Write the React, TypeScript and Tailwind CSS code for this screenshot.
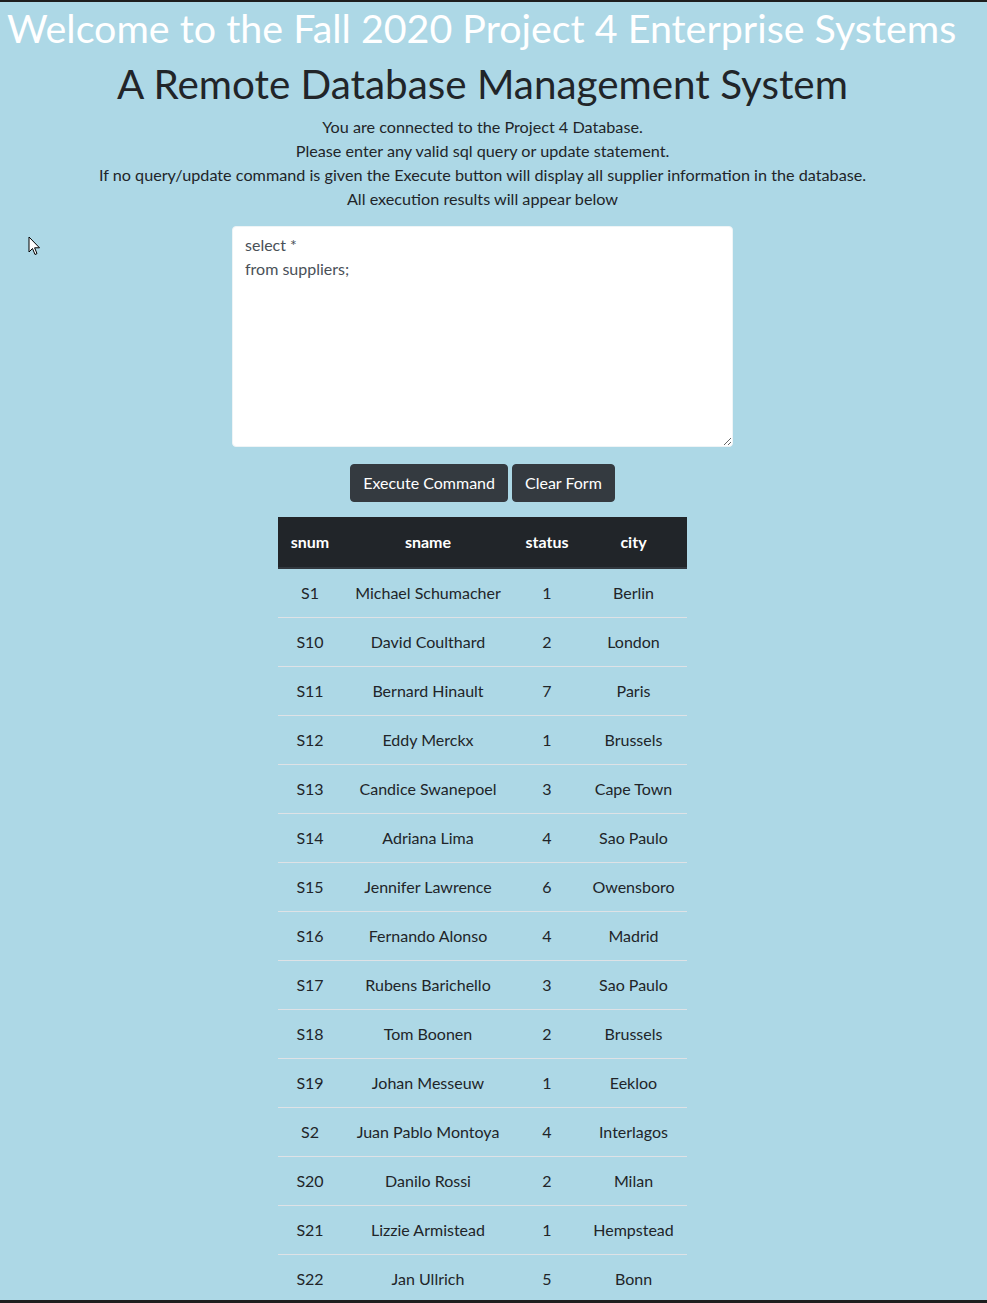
import React from "react";

const rows = [
  ["S1", "Michael Schumacher", "1", "Berlin"],
  ["S10", "David Coulthard", "2", "London"],
  ["S11", "Bernard Hinault", "7", "Paris"],
  ["S12", "Eddy Merckx", "1", "Brussels"],
  ["S13", "Candice Swanepoel", "3", "Cape Town"],
  ["S14", "Adriana Lima", "4", "Sao Paulo"],
  ["S15", "Jennifer Lawrence", "6", "Owensboro"],
  ["S16", "Fernando Alonso", "4", "Madrid"],
  ["S17", "Rubens Barichello", "3", "Sao Paulo"],
  ["S18", "Tom Boonen", "2", "Brussels"],
  ["S19", "Johan Messeuw", "1", "Eekloo"],
  ["S2", "Juan Pablo Montoya", "4", "Interlagos"],
  ["S20", "Danilo Rossi", "2", "Milan"],
  ["S21", "Lizzie Armistead", "1", "Hempstead"],
  ["S22", "Jan Ullrich", "5", "Bonn"],
];

export default function App() {
  return (
    <div
      className="relative w-[987px] h-[1303px] overflow-hidden bg-[#add8e6] border-t-2 border-b-[3px] border-[#1e1e1e] text-[#212529]"
      style={{ fontFamily: '"Segoe UI", Lato, "Open Sans", sans-serif' }}
    >
      {/* mouse pointer */}
      <svg className="absolute left-[28px] top-[234px]" width="14" height="20" viewBox="0 0 14 20">
        <path d="M1 1 L1 16 L4.5 12.5 L7 18.5 L9 17.6 L6.6 11.8 L11.5 11.8 Z" fill="#fff" stroke="#000" strokeWidth="1" strokeLinejoin="round" />
      </svg>

      <div className="w-[965px]">
        <h1 className="pl-[7px] pt-[2px] whitespace-nowrap text-[39.4px] leading-[48px] text-white mb-2">
          Welcome to the Fall 2020 Project 4 Enterprise Systems
        </h1>
        <h2 className="text-center whitespace-nowrap text-[40.4px] leading-[48px] mb-[7px]">
          A Remote Database Management System
        </h2>
        <div className="text-center text-[16.2px] leading-6">
          <p>You are connected to the Project 4 Database.</p>
          <p>Please enter any valid sql query or update statement.</p>
          <p>If no query/update command is given the Execute button will display all supplier information in the database.</p>
          <p>All execution results will appear below</p>
        </div>

        <div className="flex justify-center mt-[15px]">
          <textarea
            className="w-[501px] h-[221px] bg-white rounded border border-[#eef4f6] px-3 py-[6px] text-base leading-6 text-[#495057] outline-none"
            defaultValue={"select *\nfrom suppliers;"}
          />
        </div>

        <div className="flex justify-center gap-1 mt-[17px]">
          <button className="h-[38px] px-3 rounded bg-[#343a40] border border-[#343a40] text-white text-base">
            Execute Command
          </button>
          <button className="h-[38px] px-3 rounded bg-[#343a40] border border-[#343a40] text-white text-base">
            Clear Form
          </button>
        </div>

        <div className="flex justify-center mt-[15px]">
          <table className="w-[409px] border-collapse text-base leading-6">
            <thead>
              <tr className="bg-[#212529] text-white">
                <th className="w-[64px] h-[51px] p-0 font-bold border-b-2 border-[#32383e]">snum</th>
                <th className="w-[172px] h-[51px] p-0 font-bold border-b-2 border-[#32383e]">sname</th>
                <th className="w-[66px] h-[51px] p-0 font-bold border-b-2 border-[#32383e]">status</th>
                <th className="w-[107px] h-[51px] p-0 font-bold border-b-2 border-[#32383e]">city</th>
              </tr>
            </thead>
            <tbody>
              {rows.map((r) => (
                <tr key={r[0]} className="border-b border-[#dee2e6]">
                  {r.map((c, i) => (
                    <td key={i} className="py-3 px-0 text-center">
                      {c}
                    </td>
                  ))}
                </tr>
              ))}
            </tbody>
          </table>
        </div>
      </div>
    </div>
  );
}
